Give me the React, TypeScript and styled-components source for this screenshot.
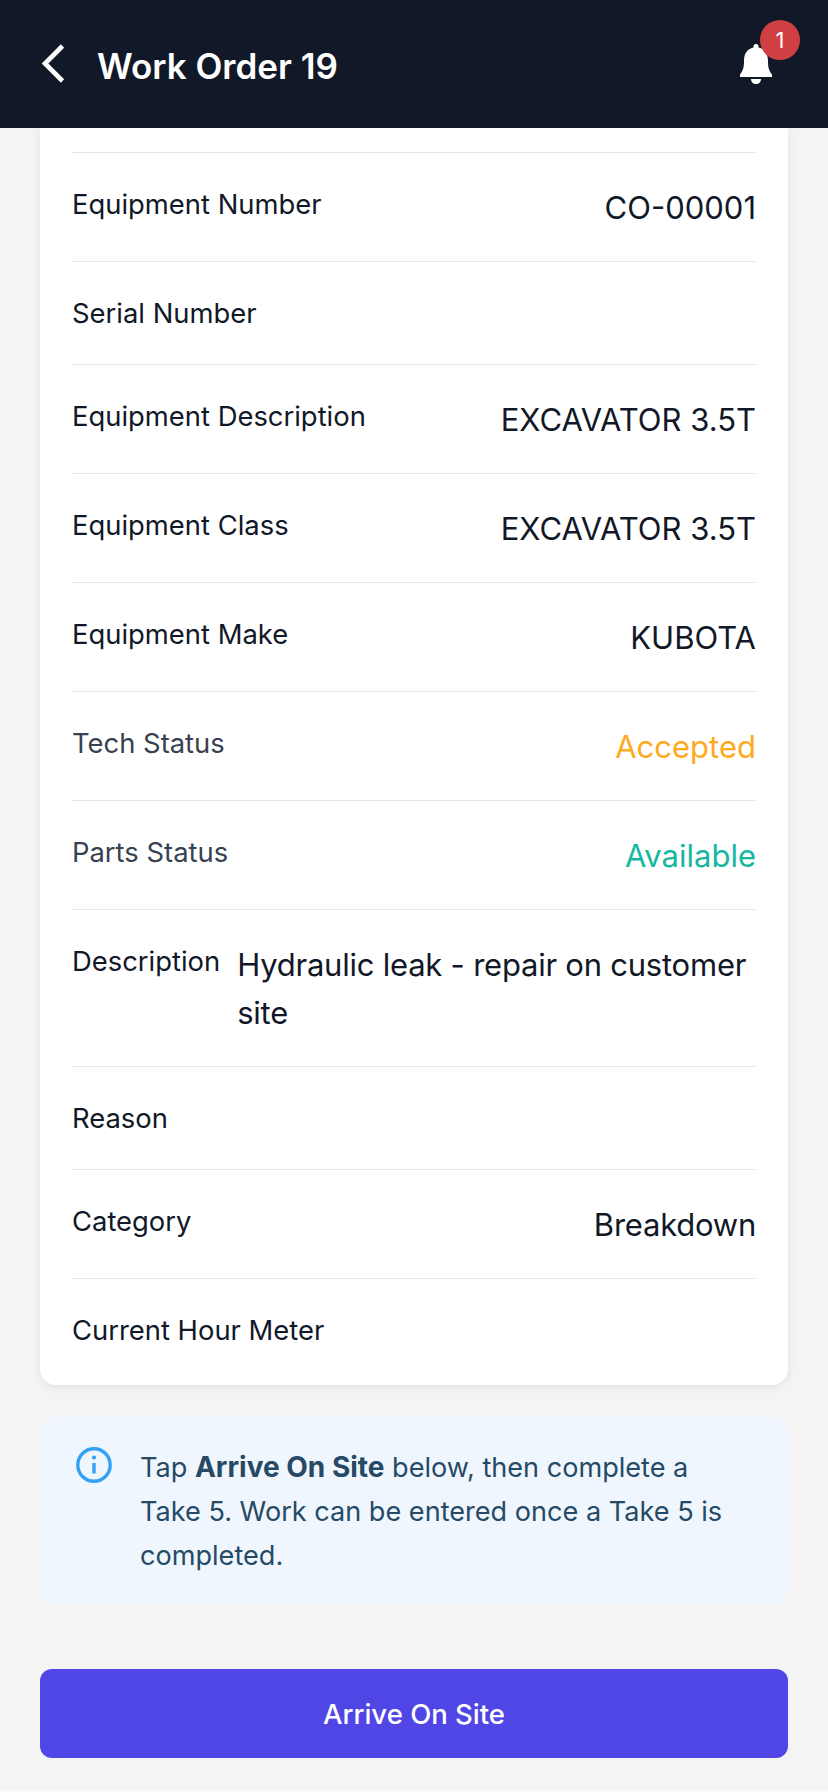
import React from "react";
import styled, { createGlobalStyle } from "styled-components";

const Global = createGlobalStyle`
  html, body { margin: 0; padding: 0; background: #f4f4f4; }
  body { font-family: Inter, "Liberation Sans", sans-serif; }
`;

const Page = styled.div`
  width: 828px;
  height: 1792px;
  box-sizing: border-box;
  overflow: hidden;
  display: flex;
  flex-direction: column;
  background: #f4f4f4;
  border-bottom: 2px solid #f9f9f9;
`;

const Header = styled.header`
  height: 128px;
  flex: none;
  background: #111827;
  display: flex;
  align-items: center;
  padding: 0 28px 0 40px;
  color: #fff;
`;

const BackButton = styled.div`
  width: 57px;
  display: flex;
  align-items: center;
`;

const Title = styled.h1`
  flex: 1;
  margin: 4px 0 0;
  font-size: 35px;
  line-height: 40px;
  font-weight: 600;
  color: #fff;
`;

const BellWrap = styled.div`
  position: relative;
  width: 60px;
  height: 64px;
  display: flex;
  align-items: center;
`;

const Badge = styled.span`
  position: absolute;
  top: -12px;
  right: 0;
  width: 40px;
  height: 40px;
  border-radius: 50%;
  background: #d04043;
  color: #fff;
  font-size: 22px;
  line-height: 40px;
  text-align: center;
`;

const Content = styled.main`
  flex: 1;
  padding: 0 40px;
  display: flex;
  flex-direction: column;
`;

const Card = styled.section`
  background: #fff;
  border-radius: 0 0 16px 16px;
  box-shadow: 0 2px 10px rgba(0, 0, 0, 0.08);
  padding: 24px 32px 0;
  height: 1257px;
  box-sizing: border-box;
  flex: none;
`;

const Row = styled.div`
  display: flex;
  justify-content: space-between;
  align-items: flex-start;
  gap: 17px;
  padding: 30px 0;
  border-top: 1px solid #e5e7eb;
`;

const Label = styled.span<{ $muted?: boolean }>`
  flex: none;
  font-size: 27.4px;
  line-height: 42px;
  color: ${(p) => (p.$muted ? "#374151" : "#111827")};
`;

const Value = styled.span<{ $color?: string; $left?: boolean; $tight?: boolean }>`
  font-size: 31px;
  line-height: 48px;
  margin: 1px 0 -1px;
  letter-spacing: ${(p) => (p.$tight ? "-0.23px" : "0")};
  color: ${(p) => p.$color ?? "#111827"};
  text-align: ${(p) => (p.$left ? "left" : "right")};
`;

const Notice = styled.div`
  margin-top: 32px;
  height: 188px;
  box-sizing: border-box;
  background: #eff6fd;
  border-radius: 16px;
  padding: 28px 32px 28px 36px;
  display: flex;
  gap: 28px;
  flex: none;
`;

const NoticeIcon = styled.div`
  flex: none;
  width: 36px;
  margin-top: 2px;
`;

const NoticeText = styled.p`
  margin: 0;
  font-size: 27.1px;
  line-height: 44px;
  color: #264a66;
`;

const Strong = styled.strong`
  font-size: 28px;
  font-weight: 700;
`;

const PrimaryButton = styled.button`
  margin-top: 64px;
  height: 89px;
  flex: none;
  border: none;
  border-radius: 12px;
  background: #4f46e5;
  color: #fff;
  font-family: inherit;
  font-size: 27.5px;
  font-weight: 500;
`;

const rows: { label: string; value?: string; muted?: boolean; color?: string; left?: boolean; tight?: boolean }[] = [
  { label: "Equipment Number", value: "CO-00001" },
  { label: "Serial Number" },
  { label: "Equipment Description", value: "EXCAVATOR 3.5T" },
  { label: "Equipment Class", value: "EXCAVATOR 3.5T" },
  { label: "Equipment Make", value: "KUBOTA" },
  { label: "Tech Status", value: "Accepted", muted: true, color: "#ffa91f" },
  { label: "Parts Status", value: "Available", muted: true, color: "#14b8a0" },
  { label: "Description", value: "Hydraulic leak - repair on customer site", left: true, tight: true },
  { label: "Reason" },
  { label: "Category", value: "Breakdown", tight: true },
  { label: "Current Hour Meter" },
];

export default function App() {
  return (
    <Page>
      <Global />
      <Header>
        <BackButton>
          <svg width="26" height="40" viewBox="0 0 26 40" fill="none">
            <path d="M22.500 2 L5 19.500 L22.500 37" stroke="#fff" strokeWidth="4.600" />
          </svg>
        </BackButton>
        <Title>Work Order 19</Title>
        <BellWrap>
          <svg width="32" height="40" viewBox="0 0 32 40" fill="#fff">
            <path d="M16 0c1.700 0 2.600 1.100 2.600 3v.6C25 5.200 28 10 28 17c0 6 .8 9.500 4 13.500V33H0v-2.500C3.200 26.500 4 23 4 17 4 10 7 5.200 13.400 3.600V3c0-1.900.9-3 2.600-3z" />
            <path d="M11 35h10c0 3-2.200 5-5 5s-5-2-5-5z" />
          </svg>
          <Badge>1</Badge>
        </BellWrap>
      </Header>
      <Content>
        <Card>
          {rows.map((r) => (
            <Row key={r.label}>
              <Label $muted={r.muted}>{r.label}</Label>
              {r.value && (
                <Value $color={r.color} $left={r.left} $tight={r.tight}>
                  {r.value}
                </Value>
              )}
            </Row>
          ))}
        </Card>
        <Notice>
          <NoticeIcon>
            <svg width="36" height="36" viewBox="0 0 36 36" fill="none">
              <circle cx="18" cy="18" r="16.200" stroke="#33a1f5" strokeWidth="3.400" />
              <path d="M18 16v10.500" stroke="#33a1f5" strokeWidth="3.400" />
              <circle cx="18" cy="10.500" r="2.100" fill="#33a1f5" />
            </svg>
          </NoticeIcon>
          <NoticeText>
            Tap <Strong>Arrive On Site</Strong> below, then complete a Take 5. Work can be entered once a Take 5 is completed.
          </NoticeText>
        </Notice>
        <PrimaryButton>Arrive On Site</PrimaryButton>
      </Content>
    </Page>
  );
}
